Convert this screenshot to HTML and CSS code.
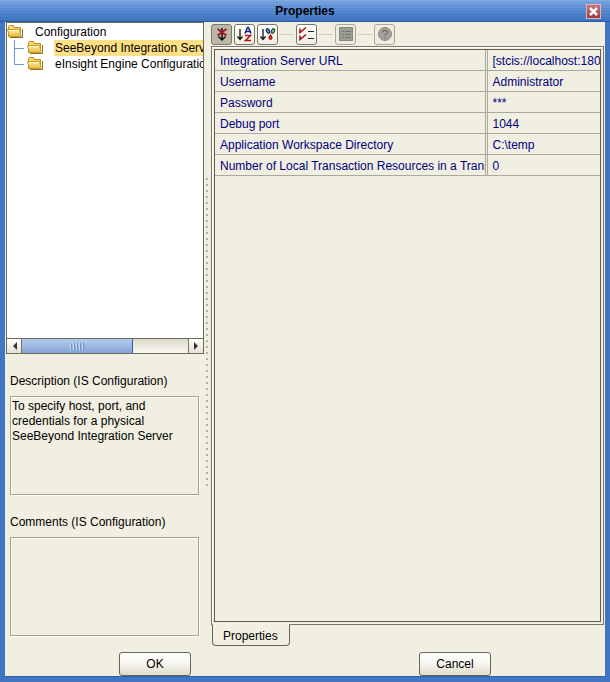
FILE: index.html
```html
<!DOCTYPE html>
<html lang="en">
<head>
    <meta charset="UTF-8">
    <meta name="viewport" content="width=device-width, initial-scale=1.0">
    <title>Properties</title>
    <link rel="stylesheet" href="styles.css">
</head>
<body>
    <svg class="defs" width="0" height="0" aria-hidden="true">
        <defs>
            <linearGradient id="gold" x1="0" y1="0" x2="0" y2="1">
                <stop offset="0" stop-color="#fff3a8"/>
                <stop offset="1" stop-color="#e9b53c"/>
            </linearGradient>
            <symbol id="folder" viewBox="0 0 16 14">
                <path d="M1.5 12.5V2.500L2.500 1.500H6.500L7.500 3.500H13.500V12.500Z" fill="#f6d870" stroke="#b98a1c"/>
                <path d="M.5 5.500H12.500L14 12.500H2.500Z" fill="url(#gold)" stroke="#cf9c2c"/>
                <path d="M2 6.500H12" stroke="#fffbd8"/>
                <path d="M3 13.500H15.500V5" stroke="#8a6d24" fill="none"/>
            </symbol>
        </defs>
    </svg>
    <div class="window">
        <header class="titlebar">
            <h1>Properties</h1>
            <button type="button" class="close" aria-label="Close">
                <svg width="9" height="9" viewBox="0 0 9 9"><path d="M1 1L8 8M8 1L1 8" stroke="#fff" stroke-width="2.5"/></svg>
            </button>
        </header>
        <main class="content">
            <section class="left">
                <div class="tree">
                    <ul>
                        <li><svg class="folder"><use href="#folder"/></svg><span>Configuration</span></li>
                        <li class="selected"><svg class="branch"><path d="M7.5 0V16M7.5 8.5H17"/></svg><svg class="folder"><use href="#folder"/></svg><span>SeeBeyond Integration Server</span></li>
                        <li><svg class="branch"><path d="M7.5 0V8.5H17"/></svg><svg class="folder"><use href="#folder"/></svg><span>eInsight Engine Configuration</span></li>
                    </ul>
                    <div class="scrollbar">
                        <button type="button" aria-label="Scroll left"><svg width="5" height="8"><path d="M5 0V8L1 4Z"/></svg></button>
                        <div class="track"><div class="thumb"><i></i></div></div>
                        <button type="button" aria-label="Scroll right"><svg width="5" height="8"><path d="M0 0V8L4 4Z"/></svg></button>
                    </div>
                </div>
                <div class="field">
                    <label for="description">Description (IS Configuration)</label>
                    <textarea id="description" readonly>To specify host, port, and credentials for a physical SeeBeyond Integration Server</textarea>
                </div>
                <div class="field">
                    <label for="comments">Comments (IS Configuration)</label>
                    <textarea id="comments"></textarea>
                </div>
            </section>
            <div class="splitter"><div class="grip"></div></div>
            <section class="right">
                <div class="toolbar">
                    <button type="button" class="pressed" aria-label="Unsorted">
                        <svg width="16" height="16" fill="none"><path d="M8 2V14M4.5 10.5L8 14L11.5 10.5" stroke="#111" stroke-width="1.500"/><path d="M3.500 3L12.500 9.500M12.500 3L3.500 9.500" stroke="#9c1420" stroke-width="1.8"/></svg>
                    </button>
                    <button type="button" aria-label="Sort by name">
                        <svg width="16" height="16" fill="none"><path d="M3 3V13M.5 10.5L3 13.500L5.500 10.5" stroke="#111" stroke-width="1.3"/><path d="M8 7.5L10.500 1.500H11.500L14 7.5M9 5.5H13" stroke="#141c8c" stroke-width="1.5"/><path d="M8 9.500H13.500L8.500 14.500H14" stroke="#b0141c" stroke-width="1.5"/></svg>
                    </button>
                    <button type="button" aria-label="Sort by type">
                        <svg width="16" height="16" fill="none"><path d="M3 3V13M.5 10.5L3 13.500L5.500 10.5" stroke="#111" stroke-width="1.3"/><ellipse cx="8" cy="5" rx="1.5" ry="2.500" transform="rotate(-30 8 5)" fill="#6f86d8" stroke="#111d5c"/><ellipse cx="13" cy="5" rx="1.5" ry="2.500" transform="rotate(30 13 5)" fill="#7fb888" stroke="#143c1c"/><path d="M10.500 8.500L9 11Q8.500 13.500 10.500 13.500T12 11Z" fill="#e02020" stroke="#a01010"/></svg>
                    </button>
                    <span class="line"></span>
                    <button type="button" aria-label="Show checked">
                        <svg width="16" height="16" fill="none"><path d="M1 2.500V6.500L7 1.500M1 9.500V13.500L7 8.500" stroke="#a3121c" stroke-width="1.6"/><path d="M9 5.500H15M9 12.500H15" stroke="#222"/></svg>
                    </button>
                    <span class="line"></span>
                    <button type="button" disabled aria-label="Customizer">
                        <svg width="16" height="16" fill="none"><path d="M1.5 1.500H14.500V14.500H1.5Z" fill="#9d9d97" stroke="#85857e"/><path d="M4 5.500H6M7 5.500H13M4 8.500H6M7 8.500H13M4 11.500H6M7 11.500H13" stroke="#74746c"/></svg>
                    </button>
                    <span class="line"></span>
                    <button type="button" disabled aria-label="Help">
                        <svg width="16" height="16" fill="none"><circle cx="8" cy="8" r="6.5" fill="#a2a29c" stroke="#8c8c86"/><path d="M5.500 6.500Q5.500 4.500 8 4.500T10.500 6.500Q10.500 7.500 8 9V10M8 11V12.500" stroke="#72726a" stroke-width="1.3"/></svg>
                    </button>
                </div>
                <div class="frame">
                    <div class="sheet">
                        <table>
                            <tr><th scope="row">Integration Server URL</th><td>[stcis://localhost:18000]</td></tr>
                            <tr><th scope="row">Username</th><td>Administrator</td></tr>
                            <tr><th scope="row">Password</th><td>***</td></tr>
                            <tr><th scope="row">Debug port</th><td>1044</td></tr>
                            <tr><th scope="row">Application Workspace Directory</th><td>C:\temp</td></tr>
                            <tr><th scope="row">Number of Local Transaction Resources in a Transaction</th><td>0</td></tr>
                        </table>
                    </div>
                </div>
                <button type="button" class="tab">Properties</button>
            </section>
        </main>
        <footer class="actions">
            <button type="button">OK</button>
            <button type="button">Cancel</button>
        </footer>
    </div>
</body>
</html>
```

FILE: styles.css
```css
*{margin:0;padding:0;box-sizing:border-box;}
body{font:12px/15px "Liberation Sans",Arial,sans-serif;color:#000;}
button,textarea{font:inherit;color:inherit;}
svg{display:block;flex:none;}
.defs{position:absolute;}

.window{min-height:100vh;display:flex;flex-direction:column;background:#f1efe2;border:solid #4176c4;border-width:0 5px 5px;box-shadow:inset 0 -1px #2f5da5;}
.titlebar{display:grid;grid-template-columns:1fr auto 1fr;align-items:center;height:22px;margin:0 -5px;padding:1px 9px 0;border-bottom:1px solid #2c5aa4;background:repeating-linear-gradient(transparent 0 2px,rgba(30,70,150,.1) 2px 3px),linear-gradient(#80aae2,#568bd2 50%,#3f74c2);}
.titlebar h1{grid-column:2;font-size:12px;font-weight:bold;}
.close{display:flex;align-items:center;justify-content:center;justify-self:end;width:15px;height:15px;border:1px solid #d9b3bd;background:linear-gradient(#c2777b,#a3393c);}

.content{flex:1;display:grid;grid-template-columns:minmax(0,199fr) 6px minmax(0,395fr);}
.left{display:flex;flex-direction:column;padding-bottom:10px;}
.tree{flex:1;display:flex;flex-direction:column;min-height:160px;margin-left:1px;border:1px solid #6b6b58;background:#fff;overflow:hidden;}
.tree ul{flex:1;list-style:none;padding-top:1px;}
.tree li{display:flex;height:16px;white-space:nowrap;}
.tree span{flex:1 0 auto;margin-left:11px;padding:1px 0 0 1px;}
.folder{width:16px;height:14px;}
.branch{width:20px;height:16px;fill:none;stroke:#6d94cc;}
.selected span{background:#fddf86;}
.scrollbar{display:flex;height:15px;border-top:1px solid #6b6b58;}
.scrollbar button{display:flex;align-items:center;justify-content:center;width:15px;border:1px solid #77776a;border-width:0 1px;background:linear-gradient(#fff,#e4e2d4);}
.scrollbar button:first-child{border-left:0;}
.scrollbar button:last-child{border-right:0;}
.scrollbar path{fill:#333;}
.track{flex:1;background:linear-gradient(#dddbcd,#f8f7ef);}
.thumb{display:flex;align-items:center;justify-content:center;width:67%;height:100%;border-right:1px solid #3a619f;background:linear-gradient(#b5cbea,#83a5d8);}
.thumb i{width:14px;height:7px;background:repeating-linear-gradient(90deg,#c9daf2 0 1px,#7192c4 1px 2px,transparent 2px 3px);}

.field{display:flex;flex-direction:column;padding:20px 5px 0;}
.field label{margin-bottom:7px;}
.field textarea{height:99px;padding:2px 1px;resize:none;outline:0;border:1px solid #a3a394;background:#f1efe2;box-shadow:1px 1px #fff,inset 1px 1px #fff;}

.splitter{display:flex;align-items:center;}
.grip{width:2px;height:50%;margin-left:2px;background:repeating-linear-gradient(#b3b1a2 0 2px,transparent 2px 6px);}

.right{display:flex;flex-direction:column;padding:1px 1px 0;}
.toolbar{display:flex;align-items:center;gap:2px;height:23px;padding-bottom:1px;}
.toolbar button{display:flex;align-items:center;justify-content:center;width:21px;height:21px;border:1px solid #77776a;border-radius:3px;background:linear-gradient(#fff,#f0eee2);}
.toolbar .pressed{background:#bbb8a8;}
.toolbar button:disabled{border-color:#aaa998;background:#efeddf;}
.line{width:14px;height:1px;background:#cfccbd;}
.frame{flex:1;display:flex;padding:2px;border:1px solid #77776a;box-shadow:inset 1px 1px #fff;}
.sheet{flex:1;min-width:0;border:1px solid #5f5f4d;overflow:hidden;}
table{width:100%;table-layout:fixed;border-collapse:separate;border-spacing:0;color:#00007f;}
th,td{height:21px;padding:2px 0 0 5px;border-bottom:1px solid #aaa99d;text-align:left;font-weight:normal;white-space:nowrap;overflow:hidden;}
th{width:70%;}
td{border-left:3px double #aaa99d;}
.tab{align-self:flex-start;height:22px;margin:-1px 0 0 1px;padding:2px 11px 0 10px;border:1px solid #66665a;border-top-color:#f1efe2;border-radius:0 0 4px 4px;background:#f1efe2;}

.actions{display:flex;padding:6px 0 1px;}
.actions button{width:72px;height:24px;margin:0 auto;border:1px solid #66665a;border-radius:3px;background:linear-gradient(#fff,#f6f5ee 50%,#dfdccb);}
```
